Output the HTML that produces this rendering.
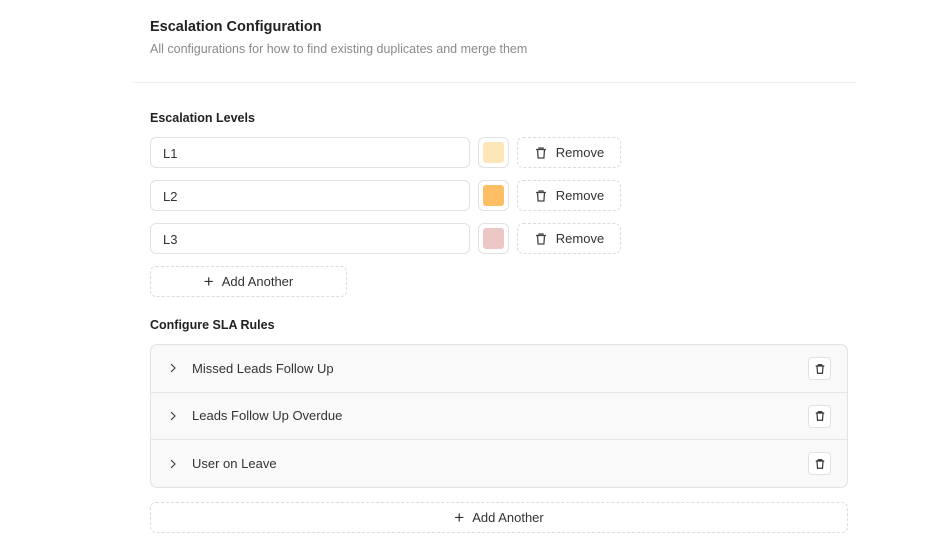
<!DOCTYPE html>
<html><head><meta charset="utf-8"><style>
*{box-sizing:border-box;margin:0;padding:0}
body{width:948px;height:542px;background:#fff;font-family:"Liberation Sans",sans-serif;color:#1f1f1f;position:relative;overflow:hidden}
.a{position:absolute}
.t{font-size:14.5px;font-weight:bold;left:150px;top:19px;color:#222}
.s{font-size:12.5px;color:#8a8a8a;left:150px;top:42px}
.hr{left:133px;top:82px;width:723px;height:1px;background:#f0f0f0}
.h{font-size:12.5px;font-weight:bold;left:150px;color:#222}
.inp{left:150px;width:320px;height:31px;border:1px solid #e2e2e2;border-radius:6px;font-size:13px;padding:8px 12px;color:#333}
.sw{left:478px;width:31px;height:31px;border:1px solid #e2e2e2;border-radius:6px}
.sw i{position:absolute;left:4px;top:4px;width:21px;height:21px;border-radius:3px}
.rm{left:517px;width:104px;height:31px;border:1px dashed #dcdcdc;border-radius:6px;font-size:13px;color:#333;display:flex;align-items:center;justify-content:center;gap:8px}
.add{border:1px dashed #dcdcdc;border-radius:6px;font-size:13px;color:#333;display:flex;align-items:center;justify-content:center;gap:8px}
.acc{left:150px;top:344px;width:698px;height:144px;border:1px solid #e2e2e2;border-radius:7px;background:#f9f9f9;overflow:hidden}
.row{position:relative;height:47.5px;border-bottom:1px solid #e6e6e6;font-size:13px;color:#333;display:flex;align-items:center;padding-left:18px}
.row:last-child{border-bottom:none}
.row .tb{position:absolute;right:16px;top:12px;width:23px;height:23px;border:1px solid #e2e2e2;border-radius:4px;background:#fff;display:flex;align-items:center;justify-content:center}
</style></head><body>
<div class="a t">Escalation Configuration</div>
<div class="a s">All configurations for how to find existing duplicates and merge them</div>
<div class="a hr"></div>
<div class="a h" style="top:111px">Escalation Levels</div>

<div class="a inp" style="top:137px">L1</div>
<div class="a sw" style="top:137px"><i style="background:#fde7b9"></i></div>
<div class="a rm" style="top:137px"><svg width="14" height="14" viewBox="0 0 14 14" fill="none" stroke="#444" stroke-width="1.3"><path d="M2 3.5h10M5 3.5V2h4v1.5M3.5 3.5l.6 8.5h5.8l.6-8.5"/></svg>Remove</div>

<div class="a inp" style="top:180px">L2</div>
<div class="a sw" style="top:180px"><i style="background:#fdbe66"></i></div>
<div class="a rm" style="top:180px"><svg width="14" height="14" viewBox="0 0 14 14" fill="none" stroke="#444" stroke-width="1.3"><path d="M2 3.5h10M5 3.5V2h4v1.5M3.5 3.5l.6 8.5h5.8l.6-8.5"/></svg>Remove</div>

<div class="a inp" style="top:223px">L3</div>
<div class="a sw" style="top:223px"><i style="background:#ebc7c6"></i></div>
<div class="a rm" style="top:223px"><svg width="14" height="14" viewBox="0 0 14 14" fill="none" stroke="#444" stroke-width="1.3"><path d="M2 3.5h10M5 3.5V2h4v1.5M3.5 3.5l.6 8.5h5.8l.6-8.5"/></svg>Remove</div>

<div class="a add" style="left:150px;top:266px;width:197px;height:31px"><span style="font-size:17px;font-weight:300">+</span>Add Another</div>

<div class="a h" style="top:318px">Configure SLA Rules</div>
<div class="a acc">
<div class="row"><svg width="8" height="10" viewBox="0 0 8 10" fill="none" stroke="#444" stroke-width="1.2" style="margin-right:15px"><path d="M2 1l4 4-4 4"/></svg>Missed Leads Follow Up<div class="tb"><svg width="12" height="12" viewBox="0 0 14 14" fill="none" stroke="#333" stroke-width="1.4"><path d="M2 3.5h10M5 3.5V2h4v1.5M3.5 3.5l.6 8.5h5.8l.6-8.5"/></svg></div></div>
<div class="row"><svg width="8" height="10" viewBox="0 0 8 10" fill="none" stroke="#444" stroke-width="1.2" style="margin-right:15px"><path d="M2 1l4 4-4 4"/></svg>Leads Follow Up Overdue<div class="tb"><svg width="12" height="12" viewBox="0 0 14 14" fill="none" stroke="#333" stroke-width="1.4"><path d="M2 3.5h10M5 3.5V2h4v1.5M3.5 3.5l.6 8.5h5.8l.6-8.5"/></svg></div></div>
<div class="row"><svg width="8" height="10" viewBox="0 0 8 10" fill="none" stroke="#444" stroke-width="1.2" style="margin-right:15px"><path d="M2 1l4 4-4 4"/></svg>User on Leave<div class="tb"><svg width="12" height="12" viewBox="0 0 14 14" fill="none" stroke="#333" stroke-width="1.4"><path d="M2 3.5h10M5 3.5V2h4v1.5M3.5 3.5l.6 8.5h5.8l.6-8.5"/></svg></div></div>
</div>
<div class="a add" style="left:150px;top:502px;width:698px;height:31px"><span style="font-size:17px;font-weight:300">+</span>Add Another</div>
</body></html>
